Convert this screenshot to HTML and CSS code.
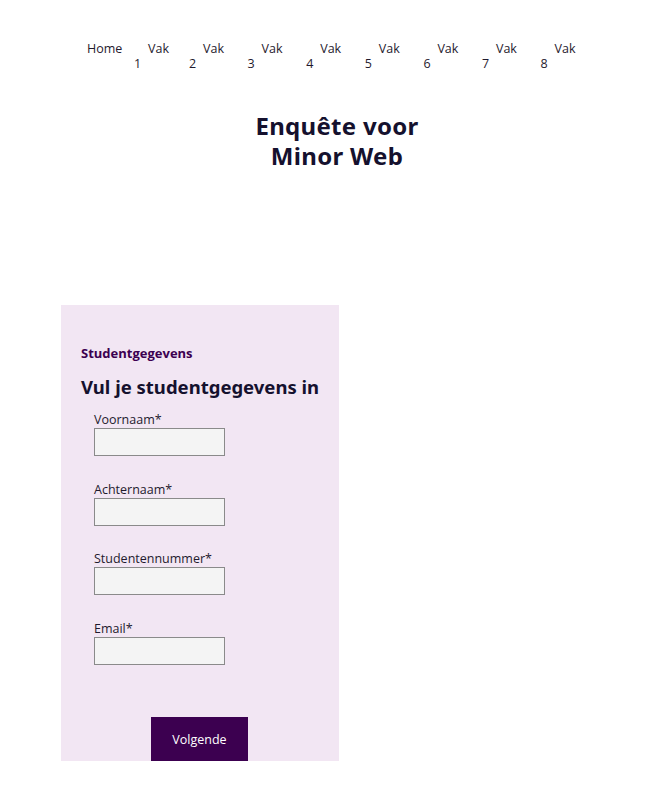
FILE: index.html
```html
<!DOCTYPE html>
<html lang="nl">
<head>
<meta charset="utf-8">
<title>Enquête voor Minor Web</title>
<link rel="stylesheet" href="styles.css">
</head>
<body>
<nav class="nav">
  <a class="nav-home" href="#">Home</a>
  <a class="nav-item" href="#">Vak 1</a>
  <a class="nav-item" href="#">Vak 2</a>
  <a class="nav-item" href="#">Vak 3</a>
  <a class="nav-item" href="#">Vak 4</a>
  <a class="nav-item" href="#">Vak 5</a>
  <a class="nav-item" href="#">Vak 6</a>
  <a class="nav-item" href="#">Vak 7</a>
  <a class="nav-item" href="#">Vak 8</a>
</nav>
<h1 class="title">Enquête voor<br>Minor Web</h1>
<form class="card">
  <p class="eyebrow">Studentgegevens</p>
  <h2 class="card-title">Vul je studentgegevens in</h2>
  <div class="field">
    <label for="voornaam">Voornaam*</label>
    <input id="voornaam" type="text">
  </div>
  <div class="field">
    <label for="achternaam">Achternaam*</label>
    <input id="achternaam" type="text">
  </div>
  <div class="field">
    <label for="nummer">Studentennummer*</label>
    <input id="nummer" type="text">
  </div>
  <div class="field">
    <label for="email">Email*</label>
    <input id="email" type="email">
  </div>
  <div class="actions">
    <button type="button" class="btn">Volgende</button>
  </div>
</form>
</body>
</html>
```
FILE: styles.css
```css
* { box-sizing: border-box; }
html, body { margin: 0; padding: 0; background: #fff; }
body {
  font-family: "Open Sans", "Noto Sans", sans-serif;
  color: #1f1a2e;
}
.nav {
  display: flex;
  align-items: flex-start;
  padding: 41px 0 0 87px;
  font-size: 12.5px;
  line-height: 15px;
}
.nav a { color: #1f1a2e; text-decoration: none; }
.nav-home { width: 47px; }
.nav-item {
  width: 58.6px;
  padding-right: 18px;
  text-indent: 14px;
}
.nav-home + .nav-item { width: 55px; }
.title {
  margin: 40px 0 0 0;
  padding-left: 27px;
  text-align: center;
  font-family: "Noto Sans", sans-serif;
  font-weight: 700;
  font-size: 24px;
  line-height: 30px;
  letter-spacing: 0.3px;
  color: #15112e;
}
.card {
  margin: 134px 0 0 61px;
  width: 278px;
  height: 456px;
  background: #f2e6f3;
  padding: 40px 0 0 20px;
  display: flex;
  flex-direction: column;
}
.eyebrow {
  margin: 0;
  font-weight: 700;
  font-size: 13px;
  line-height: 17px;
  color: #3c0050;
}
.card-title {
  margin: 13px 0 0 0;
  font-family: "Noto Sans", sans-serif;
  font-weight: 700;
  font-size: 18.5px;
  line-height: 24px;
  letter-spacing: 0;
  color: #15112e;
}
.field {
  display: flex;
  flex-direction: column;
  align-items: flex-start;
  margin-left: 13px;
  margin-top: 13px;
}
.field + .field { margin-top: 25.7px; }
.field label {
  font-size: 12.5px;
  line-height: 16px;
  color: #1f1a2e;
}
.field input {
  width: 131px;
  height: 28px;
  margin: 0;
  border: 1px solid #8a8a8a;
  background: #f4f4f4;
  font: inherit;
}
.actions {
  margin-top: auto;
  padding-left: 70px;
}
.btn {
  width: 97px;
  height: 44px;
  border: 0;
  background: #3c0050;
  color: #fff;
  font-family: "Open Sans", sans-serif;
  font-size: 12.5px;
  font-weight: 500;
  cursor: pointer;
}
```
